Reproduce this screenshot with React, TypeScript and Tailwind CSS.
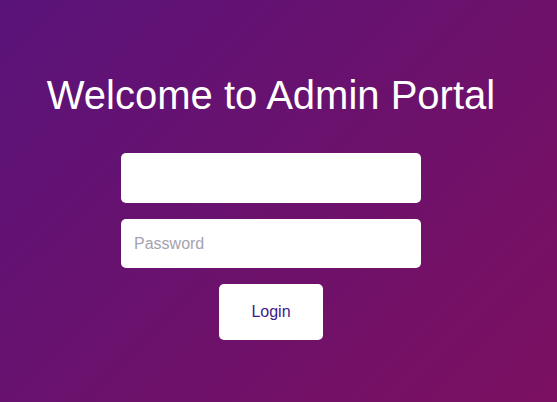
export default function App() {
  return (
    <div
      className="w-full h-screen overflow-hidden bg-[linear-gradient(135deg,#5a137a_0%,#7c1060_100%)]"
      style={{ fontFamily: '"Liberation Sans", Arial, sans-serif' }}
    >
      <div className="w-[542px] flex flex-col items-center pt-[72px]">
        <h1 className="text-[40px] leading-[46px] text-white font-normal">Welcome to Admin Portal</h1>
        <input
          type="text"
          className="mt-[35px] w-[300px] h-[50px] rounded-[5px] bg-white pl-[13px] pr-3 text-[16px] text-gray-800 outline-none border-0"
        />
        <input
          type="password"
          placeholder="Password"
          className="mt-[16px] w-[300px] h-[49px] rounded-[5px] bg-white pl-[13px] pr-3 text-[16px] text-gray-800 placeholder:text-[#a3a3b0] outline-none border-0"
        />
        <button className="mt-[16px] w-[104px] h-[56px] rounded-[5px] bg-white text-[16px] text-[#3d1a8a]">
          Login
        </button>
      </div>
    </div>
  );
}
